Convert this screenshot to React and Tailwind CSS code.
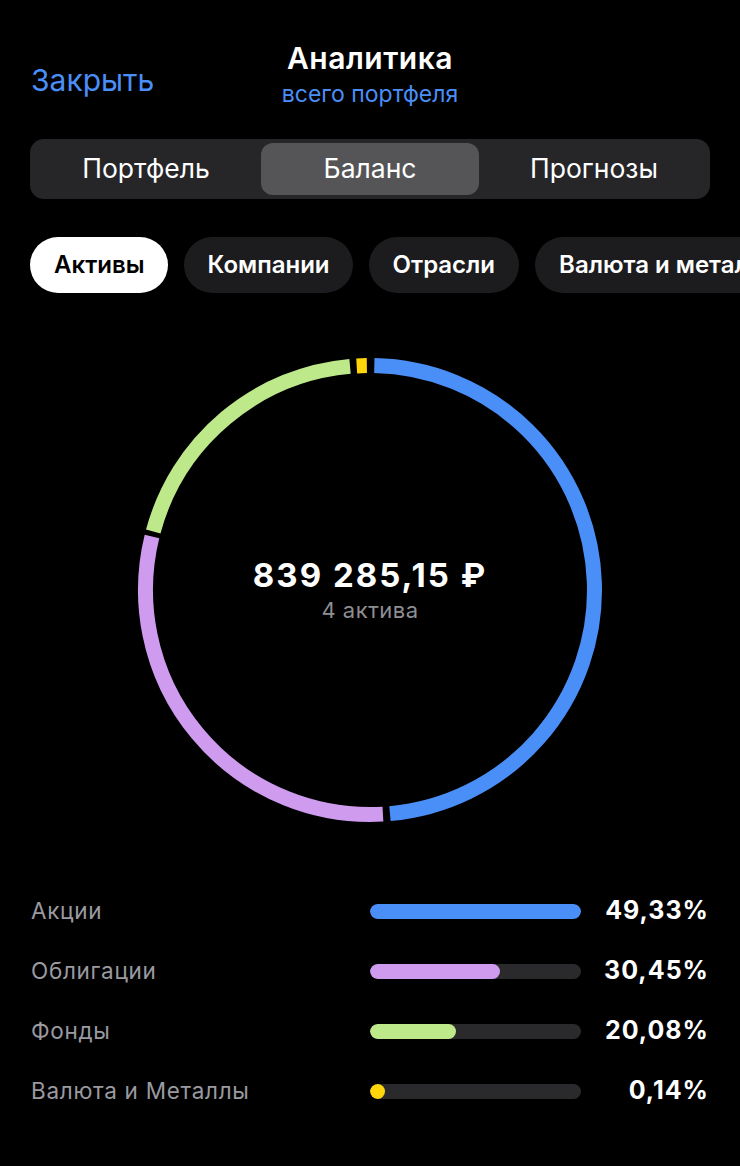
import React from 'react'

const SEGMENTS = [
  { color: '#4a8ff7', from: 1.1, to: 174.9 },
  { color: '#cf9bef', from: 176.7, to: 283.8 },
  { color: '#bde98a', from: 285.1, to: 354.9 },
  { color: '#ffd60a', from: 356.6, to: 359.2 },
]

const ROWS = [
  { label: 'Акции', pct: '49,33%', value: 49.33, color: 'bg-[#4a8ff7]' },
  { label: 'Облигации', pct: '30,45%', value: 30.45, color: 'bg-[#cf9bef]' },
  { label: 'Фонды', pct: '20,08%', value: 20.08, color: 'bg-[#bde98a]' },
  { label: 'Валюта и Металлы', pct: '0,14%', value: 0.14, color: 'bg-[#ffd60a]' },
]

function arc(cx, cy, r, a0, a1) {
  const p = a => {
    const rad = (a - 90) * Math.PI / 180
    return [cx + r * Math.cos(rad), cy + r * Math.sin(rad)]
  }
  const [x0, y0] = p(a0)
  const [x1, y1] = p(a1)
  const large = a1 - a0 > 180 ? 1 : 0
  return `M ${x0} ${y0} A ${r} ${r} 0 ${large} 1 ${x1} ${y1}`
}

function Donut() {
  return (
    <div className="relative w-[470px] h-[470px]">
      <svg width="470" height="470" viewBox="0 0 470 470" className="absolute inset-0">
        {SEGMENTS.map((s, i) => (
          <path key={i} d={arc(235, 235, 224.5, s.from, s.to)} stroke={s.color} strokeWidth="15" fill="none" />
        ))}
      </svg>
      <div className="absolute inset-0 flex flex-col items-center justify-center">
        <div className="text-[33px] font-bold text-white leading-[40px] tracking-[2px]">839 285,15 ₽</div>
        <div className="text-[22px] text-[#8e8e93] leading-[30px] tracking-[0.5px]">4 актива</div>
      </div>
    </div>
  )
}

export default function App() {
  const max = Math.max(...ROWS.map(r => r.value))
  return (
    <div className="w-[740px] h-[1166px] bg-black overflow-hidden" style={{ fontFamily: 'Inter, Roboto, "Noto Sans", sans-serif' }}>
      {/* header */}
      <div className="relative h-[120px]">
        <div className="absolute left-[31px] top-[62px] text-[30px] leading-[36px] text-[#4a8ff7]">Закрыть</div>
        <div className="flex flex-col items-center pt-[40px]">
          <div className="text-[30px] leading-[36px] font-semibold text-white tracking-[0.5px]">Аналитика</div>
          <div className="text-[23px] leading-[30px] text-[#4a8ff7] mt-[3px]">всего портфеля</div>
        </div>
      </div>

      {/* segmented */}
      <div className="mx-[30px] mt-[19px] h-[60px] rounded-[14px] bg-[#262628] grid grid-cols-3 p-[4px]">
        <div className="flex items-center justify-center text-[26.5px] text-white">Портфель</div>
        <div className="flex items-center justify-center text-[26.5px] text-white bg-[#555557] rounded-[12px] mx-[3px]">Баланс</div>
        <div className="flex items-center justify-center text-[26.5px] text-white">Прогнозы</div>
      </div>

      {/* chips */}
      <div className="flex gap-[16px] pl-[30px] mt-[38px] whitespace-nowrap">
        <div className="h-[56px] px-[24px] rounded-full bg-white text-black text-[24px] font-semibold flex items-center">Активы</div>
        <div className="h-[56px] px-[23px] rounded-full bg-[#1c1c1e] text-white text-[24px] font-semibold flex items-center">Компании</div>
        <div className="h-[56px] px-[24px] rounded-full bg-[#1c1c1e] text-white text-[24px] font-semibold flex items-center">Отрасли</div>
        <div className="h-[56px] px-[24px] rounded-full bg-[#1c1c1e] text-white text-[24px] font-semibold flex items-center shrink-0">Валюта и металлы</div>
      </div>

      {/* donut */}
      <div className="flex justify-center mt-[62px]">
        <Donut />
      </div>

      {/* list */}
      <div className="mt-[71px] px-[31px] flex flex-col gap-[30px]">
        {ROWS.map(r => (
          <div key={r.label} className="flex items-center h-[30px]">
            <div className="w-[339px] text-[22.5px] text-[#9a9aa0] tracking-[0.7px]">{r.label}</div>
            <div className="w-[211px] h-[15px] rounded-full bg-[#2a2a2c] overflow-hidden">
              <div className={`h-full rounded-full ${r.color}`} style={{ width: `${Math.max(15, (r.value / max) * 211)}px` }} />
            </div>
            <div className="flex-1 text-right text-[25px] font-bold text-white tracking-[1px]">{r.pct}</div>
          </div>
        ))}
      </div>
    </div>
  )
}
